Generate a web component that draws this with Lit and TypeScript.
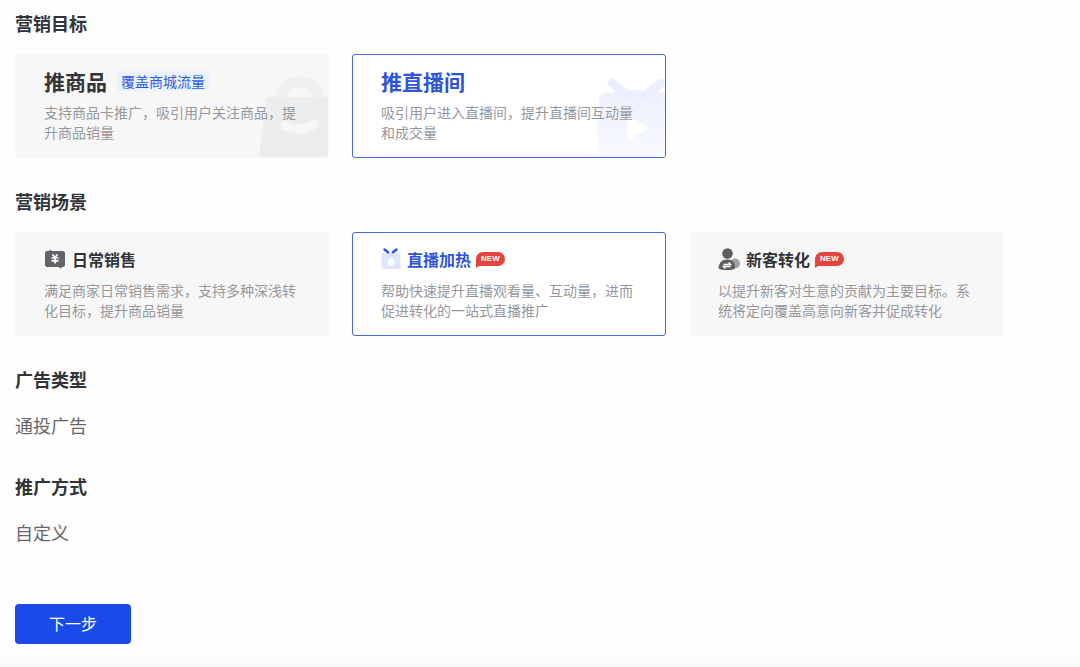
import { LitElement, html, css, nothing, TemplateResult } from "lit";
import { customElement, property } from "lit/decorators.js";
import { classMap } from "lit/directives/class-map.js";

interface Option {
  id: string;
  title: string;
  desc: string;
  tag?: string;
  isNew?: boolean;
  icon?: TemplateResult;
  art?: TemplateResult;
}

const bagArt = html`<svg width="70" height="84" viewBox="0 0 70 84" aria-hidden="true">
  <path d="M8 27Q8.300 24 11 24H70V84H1Z" fill="#ededef" />
  <path d="M23 26V24a18.500 15 0 0 1 37 0V26" fill="none" stroke="#efeff1" stroke-width="11" />
  <path d="M28.500 24C30 11.500 53 11.500 54.500 24Z" fill="#f7f7f8" />
  <path d="M27 52.500C35 57 48 57 56 51.500" fill="none" stroke="#f7f7f8" stroke-width="9" stroke-linecap="round" />
</svg>`;

const tvArt = html`<svg width="70" height="84" viewBox="0 0 70 84" aria-hidden="true">
  <defs>
    <linearGradient id="tv" x1="0" y1="0" x2="0" y2="1">
      <stop offset="0" stop-color="#eef1fd" />
      <stop offset="0.6" stop-color="#f3f5fe" />
      <stop offset="1" stop-color="#fafbff" />
    </linearGradient>
  </defs>
  <path d="M4 25Q5 21 10 20Q38 14 70 20V84H4Q1 55 4 25Z" fill="url(#tv)" />
  <path d="M17 10L34 23M66 10L50 23" fill="none" stroke="#ebeefc" stroke-width="9" stroke-linecap="round" />
  <path d="M32 46Q32 42 36 44L51 53Q54 55 51 57L36 66Q32 68 32 64Z" fill="#fff" />
</svg>`;

const cashIcon = html`<svg width="22" height="22" viewBox="0 0 22 22" aria-hidden="true">
  <path d="M3 3H5L6 1.500L8 3H19Q21 3 21 5V17Q21 19 19 19H18L17 20.500L14.500 19H3Q1 19 1 17V5Q1 3 3 3Z" fill="#626469" />
  <path d="M8.500 6.500L11 9.500L13.500 6.500M7.500 10H14.500M7.500 12.800H14.500M11 9.500V15.500" fill="none" stroke="#fff" stroke-width="1.700" />
</svg>`;

const heatIcon = html`<svg width="20" height="22" viewBox="0 0 20 22" aria-hidden="true">
  <path d="M2 5Q10 3.500 18 5Q19.500 5.300 19.500 7V19Q19.500 21 17.500 21H2.500Q0.500 21 0.500 19V7Q0.500 5.300 2 5Z" fill="#dfe5fc" />
  <path d="M3.500 1.500L7 4.200M15.500 1.500L12 4.200" stroke="#2f50d8" stroke-width="2.400" stroke-linecap="round" />
  <path d="M10 9C11 11 13.500 12.500 13.500 14.500A3.500 3.300 0 0 1 6.500 14.500C6.500 12.500 9 11 10 9Z" fill="#fff" />
</svg>`;

const userIcon = html`<svg width="22" height="24" viewBox="0 0 22 24" aria-hidden="true">
  <circle cx="17" cy="16.500" r="5" fill="#a0a1a4" />
  <circle cx="9.500" cy="6.500" r="5.300" fill="#5d5e61" />
  <path d="M0.500 21C1 15 4.500 12.500 9.500 12.500S17 15.500 17 21Q17 23 9 23T0.500 21Z" fill="#5d5e61" />
  <path d="M5.500 17.500H12.500L10.700 15.500M12.500 19.500H5.500L7.300 21.500" fill="none" stroke="#fff" stroke-width="1.500" />
</svg>`;

const GOALS: Option[] = [
  {
    id: "goods",
    title: "推商品",
    tag: "覆盖商城流量",
    desc: "支持商品卡推广，吸引用户关注商品，提升商品销量",
    art: bagArt,
  },
  {
    id: "live",
    title: "推直播间",
    desc: "吸引用户进入直播间，提升直播间互动量和成交量",
    art: tvArt,
  },
];

const SCENES: Option[] = [
  {
    id: "daily",
    title: "日常销售",
    desc: "满足商家日常销售需求，支持多种深浅转化目标，提升商品销量",
    icon: cashIcon,
  },
  {
    id: "heat",
    title: "直播加热",
    desc: "帮助快速提升直播观看量、互动量，进而促进转化的一站式直播推广",
    icon: heatIcon,
    isNew: true,
  },
  {
    id: "newcomer",
    title: "新客转化",
    desc: "以提升新客对生意的贡献为主要目标。系统将定向覆盖高意向新客并促成转化",
    icon: userIcon,
    isNew: true,
  },
];

@customElement("option-cards")
export class OptionCards extends LitElement {
  @property() name = "";
  @property() label = "";
  @property() value = "";
  @property({ attribute: false }) options: Option[] = [];

  static styles = css`
    :host {
      display: block;
    }
    .grid {
      display: grid;
      grid-template-columns: repeat(3, minmax(0, 1fr));
      gap: 23px;
    }
    .card {
      position: relative;
      overflow: hidden;
      box-sizing: border-box;
      padding: 12px 28px 15px;
      border: 1px solid #f7f7f8;
      border-radius: 3px;
      background: #f7f7f8;
      cursor: pointer;
    }
    .card.selected {
      border-color: #4566dc;
      background: #fff;
    }
    .card:focus-within {
      border-color: #4566dc;
    }
    .radio {
      position: absolute;
      inset: 0;
      margin: 0;
      opacity: 0;
      cursor: pointer;
    }
    .art {
      position: absolute;
      right: 0;
      bottom: 0;
      display: flex;
    }
    .head {
      position: relative;
      display: flex;
      align-items: center;
      height: 28px;
      margin-bottom: 7px;
    }
    .icon {
      display: flex;
      margin-right: 6px;
    }
    .title {
      font-size: 21px;
      font-weight: 700;
      line-height: 28px;
      color: #333438;
    }
    .title.small {
      font-size: 16px;
    }
    .selected .title {
      color: #2f54dc;
    }
    .tag {
      margin-left: 10px;
      padding: 0 4px;
      border-radius: 2px;
      background: #e8f3ff;
      color: #3558e4;
      font-size: 14px;
      line-height: 20px;
    }
    .new {
      position: relative;
      margin-left: 5px;
      padding: 0 5px;
      border-radius: 7px 7px 7px 0;
      background: #e5433d;
      color: #fff;
      font-family: "Liberation Sans", sans-serif;
      font-size: 8px;
      font-weight: 700;
      line-height: 14px;
    }
    .new::after {
      content: "";
      position: absolute;
      left: 0;
      top: 100%;
      border-top: 2px solid #e5433d;
      border-right: 3px solid transparent;
    }
    .desc {
      position: relative;
      margin: 0;
      font-size: 14px;
      line-height: 20px;
      color: #97989c;
    }
  `;

  private pick(id: string) {
    this.value = id;
  }

  render() {
    return html`<div class="grid" role="radiogroup" aria-label=${this.label}>
      ${this.options.map(
        (o) => html`<label class=${classMap({ card: true, selected: o.id === this.value })}>
          <input
            class="radio"
            type="radio"
            name=${this.name}
            .value=${o.id}
            .checked=${o.id === this.value}
            @change=${() => this.pick(o.id)}
          />
          ${o.art ? html`<span class="art">${o.art}</span>` : nothing}
          <div class="head">
            ${o.icon ? html`<span class="icon">${o.icon}</span>` : nothing}
            <span class=${classMap({ title: true, small: !!o.icon })}>${o.title}</span>
            ${o.tag ? html`<span class="tag">${o.tag}</span>` : nothing}
            ${o.isNew ? html`<span class="new">NEW</span>` : nothing}
          </div>
          <p class="desc">${o.desc}</p>
        </label>`
      )}
    </div>`;
  }
}

@customElement("app-root")
export class AppRoot extends LitElement {
  static styles = css`
    :host {
      display: block;
      box-sizing: border-box;
      min-height: 100vh;
      padding: 11px 77px 23px 15px;
      background: linear-gradient(to top, #f8f8f8, #fefefe 20px);
      font-family: "Noto Sans CJK SC", sans-serif;
    }
    .section {
      margin-bottom: 31px;
    }
    .info {
      margin-bottom: 37px;
    }
    .heading {
      margin: 0 0 19px;
      font-size: 18px;
      font-weight: 700;
      line-height: 24px;
      color: #333438;
    }
    .info .heading {
      margin-bottom: 22px;
    }
    .value {
      margin: 0;
      font-size: 18px;
      line-height: 24px;
      color: #66676a;
    }
    .next {
      display: block;
      margin-top: 60px;
      padding: 7px 34px 9px;
      border: 0;
      border-radius: 4px;
      background: #1a4be8;
      color: #fff;
      font-family: inherit;
      font-size: 16px;
      line-height: 24px;
      cursor: pointer;
    }
  `;

  render() {
    return html`
      <section class="section">
        <h2 class="heading">营销目标</h2>
        <option-cards name="goal" label="营销目标" value="live" .options=${GOALS}></option-cards>
      </section>
      <section class="section">
        <h2 class="heading">营销场景</h2>
        <option-cards name="scene" label="营销场景" value="heat" .options=${SCENES}></option-cards>
      </section>
      <section class="info">
        <h2 class="heading">广告类型</h2>
        <p class="value">通投广告</p>
      </section>
      <section class="info">
        <h2 class="heading">推广方式</h2>
        <p class="value">自定义</p>
      </section>
      <button class="next" type="button">下一步</button>
    `;
  }
}
